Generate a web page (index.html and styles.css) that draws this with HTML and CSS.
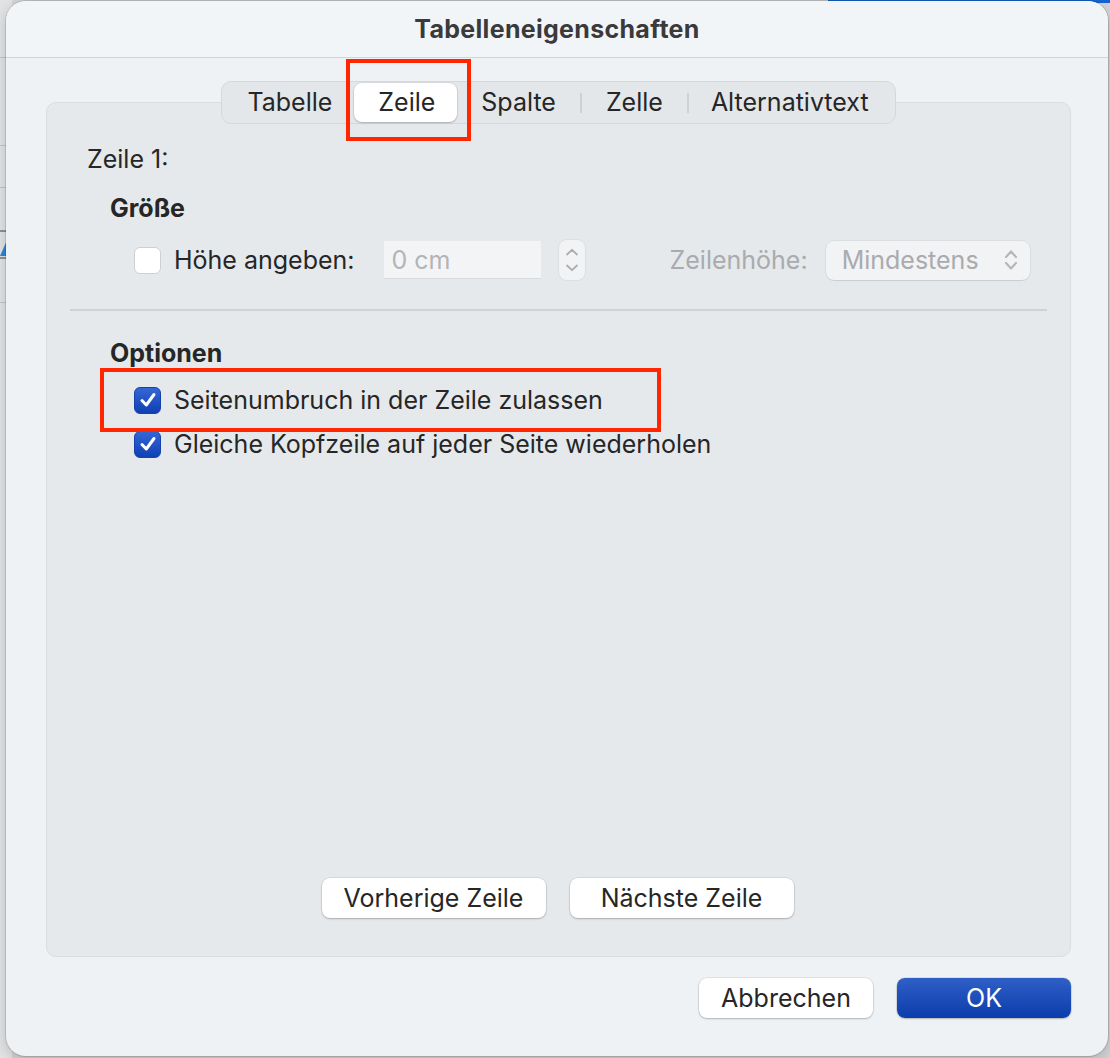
FILE: index.html
```html
<!DOCTYPE html>
<html lang="de">
<head>
    <meta charset="UTF-8">
    <title>Tabelleneigenschaften</title>
    <link rel="stylesheet" href="styles.css">
</head>
<body>
    <!-- Window behind the sheet -->
    <div class="desktop">
        <div class="back-window">
            <div class="back-line l1"></div>
            <div class="back-line l2"></div>
            <div class="back-line l3"></div>
            <div class="back-line l4"></div>
            <div class="back-tri"></div>
            <div class="back-line l5"></div>
            <div class="back-line l6"></div>
        </div>
        <div class="back-accent"></div>

        <!-- Dialog -->
        <div class="dialog">
            <div class="titlebar">Tabelleneigenschaften</div>

            <div class="dialog-body">
                <div class="groupbox">
                    <div class="tabs">
                        <div class="tab first">Tabelle</div>
                        <div class="tab active">Zeile</div>
                        <div class="tab after-active">Spalte</div>
                        <div class="tab-sep"></div>
                        <div class="tab">Zelle</div>
                        <div class="tab-sep"></div>
                        <div class="tab last">Alternativtext</div>
                    </div>

                    <div class="row-label">Zeile 1:</div>
                    <div class="section-title">Größe</div>

                    <div class="size-row">
                        <span class="checkbox"></span>
                        <span class="label">Höhe angeben:</span>
                        <div class="textfield">0 cm</div>
                        <div class="stepper">
                            <svg width="14" height="8" viewBox="0 0 14 8"><path d="M2 6.5 L7 1.8 L12 6.5" fill="none" stroke="#a9acb0" stroke-width="1.8" stroke-linecap="round" stroke-linejoin="round"/></svg>
                            <svg width="14" height="8" viewBox="0 0 14 8"><path d="M2 1.5 L7 6.2 L12 1.5" fill="none" stroke="#a9acb0" stroke-width="1.8" stroke-linecap="round" stroke-linejoin="round"/></svg>
                        </div>
                        <span class="label muted">Zeilenhöhe:</span>
                        <div class="popup">
                            <span>Mindestens</span>
                            <svg width="16" height="26" viewBox="0 0 16 26"><path d="M3 10 L8 4.5 L13 10 M3 16 L8 21.5 L13 16" fill="none" stroke="#b5b7ba" stroke-width="2.2" stroke-linecap="round" stroke-linejoin="round"/></svg>
                        </div>
                    </div>

                    <div class="separator"></div>

                    <div class="section-title options">Optionen</div>

                    <div class="check-row first">
                        <span class="checkbox checked">
                            <svg width="20" height="18" viewBox="0 0 20 18"><path d="M4 9.5 L8.3 14 L16 3.5" fill="none" stroke="#fff" stroke-width="3" stroke-linecap="round" stroke-linejoin="round"/></svg>
                        </span>
                        <span class="label">Seitenumbruch in der Zeile zulassen</span>
                    </div>
                    <div class="check-row">
                        <span class="checkbox checked">
                            <svg width="20" height="18" viewBox="0 0 20 18"><path d="M4 9.5 L8.3 14 L16 3.5" fill="none" stroke="#fff" stroke-width="3" stroke-linecap="round" stroke-linejoin="round"/></svg>
                        </span>
                        <span class="label">Gleiche Kopfzeile auf jeder Seite wiederholen</span>
                    </div>

                    <div class="spacer"></div>

                    <div class="nav-buttons">
                        <button class="btn">Vorherige Zeile</button>
                        <button class="btn">Nächste Zeile</button>
                    </div>
                </div>

                <div class="footer">
                    <button class="btn">Abbrechen</button>
                    <button class="btn primary">OK</button>
                </div>
            </div>

            <!-- Red highlight marks -->
            <div class="mark mark-tab"></div>
            <div class="mark mark-option"></div>
        </div>
    </div>
</body>
</html>
```

FILE: styles.css
```css
/* General */
body {
    margin: 0;
    font-family: Inter, "Noto Sans", sans-serif;
    color: #262626;
    overflow: hidden;
}

.desktop {
    position: relative;
    width: 1110px;
    height: 1058px;
    background: #d4d4d4;
    overflow: hidden;
}

/* Window peeking out on the left */
.back-window {
    position: absolute;
    left: 0;
    top: 0;
    width: 12px;
    height: 1058px;
    background: #e2e3e5;
}

.back-line {
    position: absolute;
    left: 0;
    width: 12px;
    height: 1px;
    background: #c2c4c6;
}

.l1 { top: 57px; }
.l2 { top: 145px; }
.l3 { top: 187px; }
.l4 { top: 230px; height: 2px; background: #8e9094; }
.l5 { top: 257px; height: 2px; background: #8e9094; }
.l6 { top: 302px; }

.back-tri {
    position: absolute;
    left: 0;
    top: 238px;
    width: 0;
    height: 0;
    border-left: 8px solid transparent;
    border-bottom: 18px solid #2b86e0;
}

.back-accent {
    position: absolute;
    left: 828px;
    top: 0;
    width: 290px;
    height: 3px;
    background: #1565d0;
}

/* Dialog sheet */
.dialog {
    position: absolute;
    left: 6px;
    top: 1px;
    width: 1102px;
    height: 1055px;
    background: #eef2f5;
    border-radius: 20px;
    box-shadow: 0 0 0 1px rgba(0, 0, 0, 0.12), 0 4px 14px rgba(0, 0, 0, 0.18);
    display: flex;
    flex-direction: column;
    overflow: hidden;
}

.titlebar {
    height: 56px;
    flex-shrink: 0;
    display: flex;
    align-items: center;
    justify-content: center;
    background: #f1f5f8;
    border-bottom: 1px solid #d2d5d8;
    font-size: 25px;
    font-weight: 700;
    color: #3a3a3c;
    letter-spacing: 0.3px;
}

.dialog-body {
    flex: 1;
    display: flex;
    flex-direction: column;
    padding: 44px 37px 38px 40px;
}

/* Group box */
.groupbox {
    flex: 1;
    display: flex;
    flex-direction: column;
    background: #e5e9ec;
    border: 1px solid #dadee1;
    border-radius: 10px;
    font-size: 25px;
}

/* Segmented tabs */
.tabs {
    align-self: center;
    margin-top: -22px;
    height: 41px;
    display: flex;
    align-items: center;
    padding: 0 1px;
    background: #e4e7ea;
    border: 1px solid #d5d8db;
    border-radius: 10px;
}

.tab {
    padding: 0 24px;
    line-height: 39px;
}

.tab.first {
    padding: 0 22px 0 24px;
}

.tab.active {
    background: #fff;
    border-radius: 8px;
    padding: 0 22px 0 24px;
    box-shadow: 0 1px 2px rgba(0, 0, 0, 0.22), 0 0 0 0.5px rgba(0, 0, 0, 0.08);
}

.tab.after-active {
    padding-left: 24px;
}

.tab.last {
    padding: 0 25px 0 22px;
}

.tab-sep {
    width: 2px;
    height: 20px;
    background: #cfd2d5;
}

.row-label {
    margin: 21px 0 0 40px;
    line-height: 28px;
}

.section-title {
    margin: 21px 0 0 63px;
    line-height: 28px;
    font-weight: 700;
}

.section-title.options {
    margin-top: 28px;
}

/* Size row */
.size-row {
    margin: 18px 0 0 87px;
    height: 40px;
    display: flex;
    align-items: center;
}

.checkbox {
    width: 27px;
    height: 27px;
    box-sizing: border-box;
    background: #fff;
    border: 1px solid #cdd0d3;
    border-radius: 6px;
    display: inline-flex;
    align-items: center;
    justify-content: center;
    flex-shrink: 0;
}

.checkbox.checked {
    background: linear-gradient(#3466d6, #0f40b4);
    border-color: #1541ad;
}

.label {
    margin-left: 13px;
    line-height: 28px;
    white-space: nowrap;
}

.label.muted {
    color: #a9abae;
    margin-left: 85px;
}

.textfield {
    margin-left: 29px;
    width: 157px;
    height: 38px;
    box-sizing: border-box;
    background: #f3f4f6;
    border-bottom: 1px solid #d8dadc;
    color: #b3b4b6;
    padding-left: 8px;
    line-height: 38px;
}

.stepper {
    margin-left: 18px;
    width: 26px;
    height: 40px;
    box-sizing: border-box;
    background: #f2f3f5;
    border-radius: 8px;
    box-shadow: 0 0 0 1px #dcdee0;
    display: flex;
    flex-direction: column;
    align-items: center;
    justify-content: space-evenly;
}

.popup {
    margin-left: 18px;
    width: 204px;
    height: 39px;
    box-sizing: border-box;
    background: #f2f3f5;
    border-radius: 8px;
    box-shadow: 0 0 0 0.5px rgba(0, 0, 0, 0.08), 0 1px 1px rgba(0, 0, 0, 0.08);
    display: flex;
    align-items: center;
    justify-content: space-between;
    padding: 0 11px 0 16px;
    color: #a9abae;
}

.separator {
    margin: 29px 23px 0 23px;
    height: 2px;
    background: #cfd3d7;
}

/* Option rows */
.check-row {
    margin: 16px 0 0 87px;
    display: flex;
    align-items: center;
    height: 28px;
}

.check-row.first {
    margin-top: 19px;
}

.spacer {
    flex: 1;
}

/* Buttons */
.btn {
    font-family: inherit;
    font-size: 25px;
    color: #262626;
    background: #fff;
    border: none;
    border-radius: 8px;
    height: 40px;
    width: 224px;
    padding: 0;
    box-shadow: 0 0 0 0.5px rgba(0, 0, 0, 0.12), 0 1px 2px rgba(0, 0, 0, 0.22);
}

.nav-buttons {
    display: flex;
    justify-content: center;
    gap: 24px;
    margin-bottom: 38px;
    padding-right: 2px;
}

.footer {
    display: flex;
    justify-content: flex-end;
    gap: 24px;
    margin-top: 21px;
}

.footer .btn {
    width: 174px;
}

.btn.primary {
    background: linear-gradient(#2f5fc6, #0b3dac);
    color: #fff;
    box-shadow: 0 0 0 0.5px rgba(0, 0, 0, 0.15), 0 1px 2px rgba(0, 0, 0, 0.2);
}

/* Red annotation boxes */
.mark {
    position: absolute;
    border: 4px solid #ff2600;
    box-sizing: border-box;
}

.mark-tab {
    left: 340px;
    top: 58px;
    width: 125px;
    height: 82px;
}

.mark-option {
    left: 94px;
    top: 367px;
    width: 561px;
    height: 64px;
}
```
